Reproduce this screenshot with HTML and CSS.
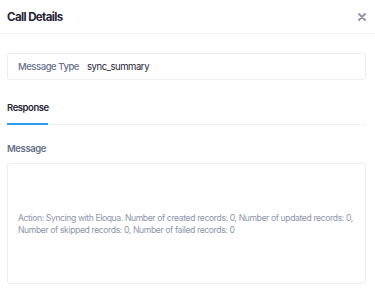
FILE: index.html
```html
<!DOCTYPE html>
<html lang="en">
<head>
    <meta charset="UTF-8">
    <meta name="viewport" content="width=device-width, initial-scale=1.0">
    <title>Call Details</title>
    <link rel="stylesheet" href="styles.css">
</head>
<body>
    <div class="modal">
        <div class="modal-header">
            <h2>Call Details</h2>
            <svg class="close" width="8" height="8" viewBox="0 0 8 8">
                <path d="M1 1L7 7M7 1L1 7" stroke="#8d95a8" stroke-width="1.8" stroke-linecap="round"/>
            </svg>
        </div>

        <div class="modal-body">
            <div class="field-box">
                <span class="field-label">Message Type</span>
                <span class="field-value">sync_summary</span>
            </div>

            <div class="tabs">
                <div class="tab active">Response</div>
            </div>

            <div class="section-label">Message</div>
            <div class="message-box">
                Action: Syncing with Eloqua. Number of created records: 0, Number of updated records: 0, Number of skipped records: 0, Number of failed records: 0
            </div>
        </div>
    </div>
</body>
</html>
```

FILE: styles.css
```css
* {
    margin: 0;
    padding: 0;
    box-sizing: border-box;
}

body {
    font-family: Inter, 'Noto Sans', sans-serif;
    background: #fff;
    color: #1f2533;
}

.modal {
    width: 375px;
}

.modal-header {
    display: flex;
    align-items: center;
    justify-content: space-between;
    height: 34px;
    padding: 0 9px 0 7px;
    border-bottom: 1px solid #f0f1f4;
}

.modal-header h2 {
    font-size: 11.5px;
    font-weight: 700;
    color: #1f2533;
    letter-spacing: -0.6px;
}

.modal-body {
    padding: 19px 9px 0 7px;
}

.field-box {
    display: flex;
    align-items: center;
    gap: 8px;
    height: 27px;
    padding: 0 10px;
    border: 1px solid #eceef2;
    border-radius: 3px;
    font-size: 9.5px;
    letter-spacing: -0.45px;
}

.field-label {
    color: #66708a;
    font-weight: 500;
}

.field-value {
    color: #1f2533;
}

.tabs {
    display: flex;
    margin-top: 18px;
    border-bottom: 1px solid #f0f1f4;
}

.tab {
    font-size: 9.5px;
    font-weight: 600;
    color: #1f2533;
    padding: 4px 0 10px;
    width: 41px;
    letter-spacing: -0.45px;
}

.tab.active {
    border-bottom: 2px solid #2d9cf0;
    margin-bottom: -1px;
}

.section-label {
    margin-top: 18px;
    font-size: 9.5px;
    font-weight: 600;
    color: #66708a;
    letter-spacing: -0.4px;
}

.message-box {
    display: flex;
    align-items: center;
    margin-top: 9px;
    height: 121px;
    padding: 0 10px;
    border: 1px solid #eceef2;
    border-radius: 3px;
    font-size: 8.6px;
    line-height: 12px;
    letter-spacing: -0.38px;
    color: #8d95ab;
}
```
